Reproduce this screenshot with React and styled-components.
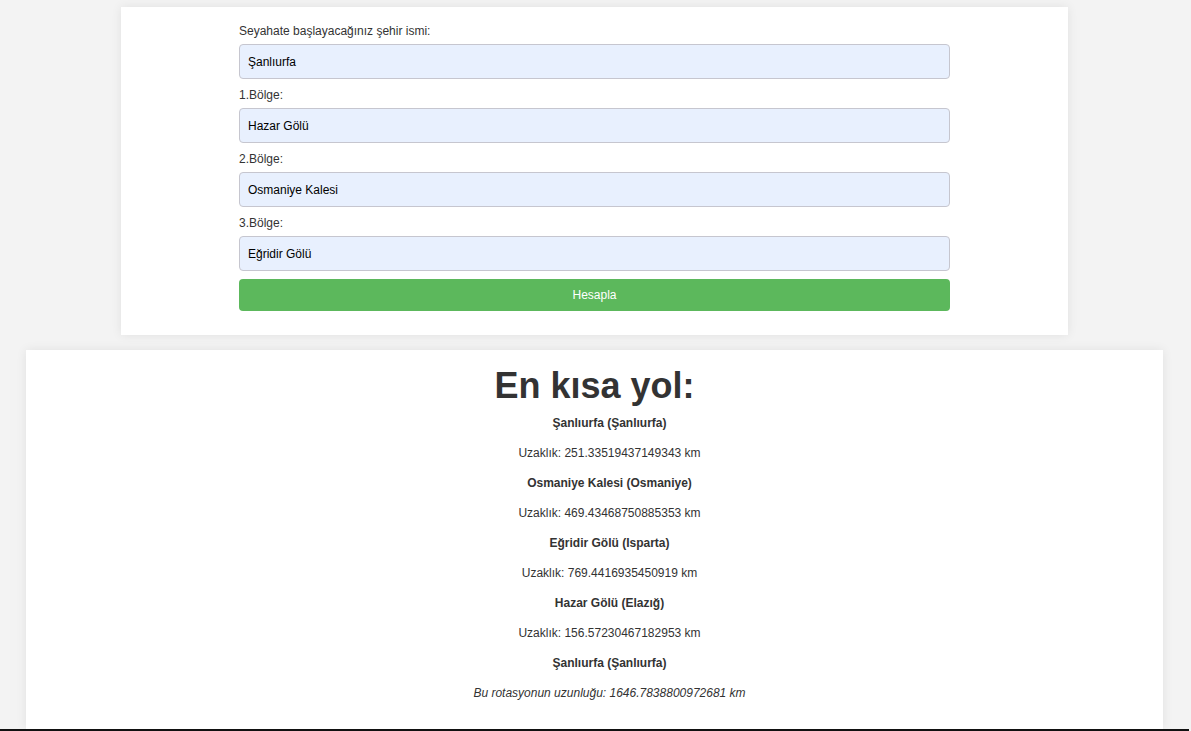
import React from 'react'
import styled, { createGlobalStyle } from 'styled-components'

const GlobalStyle = createGlobalStyle`
    html, body {
        margin: 0;
        padding: 0;
        background: #f3f3f3;
        font-family: "Liberation Sans", Arial, sans-serif;
        color: #333;
    }
`

const fields = [
    { label: 'Seyahate başlayacağınız şehir ismi:', value: 'Şanlıurfa' },
    { label: '1.Bölge:', value: 'Hazar Gölü' },
    { label: '2.Bölge:', value: 'Osmaniye Kalesi' },
    { label: '3.Bölge:', value: 'Eğridir Gölü' },
]

const route = [
    { place: 'Şanlıurfa (Şanlıurfa)', distance: '251.33519437149343' },
    { place: 'Osmaniye Kalesi (Osmaniye)', distance: '469.43468750885353' },
    { place: 'Eğridir Gölü (Isparta)', distance: '769.4416935450919' },
    { place: 'Hazar Gölü (Elazığ)', distance: '156.57230467182953' },
    { place: 'Şanlıurfa (Şanlıurfa)' },
]

const App = () => {
    return (
        <Page>
            <GlobalStyle />
            <FormCard>
                <Form onSubmit={e => e.preventDefault()}>
                    {fields.map(f => (
                        <Group key={f.label}>
                            <Label>{f.label}</Label>
                            <Input defaultValue={f.value} />
                        </Group>
                    ))}
                    <Button type="submit">Hesapla</Button>
                </Form>
            </FormCard>
            <ResultCard>
                <Title>En kısa yol:</Title>
                <Lines>
                    {route.map((r, i) => (
                        <React.Fragment key={i}>
                            <Line $bold>{r.place}</Line>
                            {r.distance && <Line>Uzaklık: {r.distance} km</Line>}
                        </React.Fragment>
                    ))}
                    <Line $italic>Bu rotasyonun uzunluğu: 1646.7838800972681 km</Line>
                </Lines>
            </ResultCard>
            <Footer />
        </Page>
    )
}

const Page = styled.div`
    padding: 7px 2px 0 0;
    display: flex;
    flex-direction: column;
    align-items: center;
`

const FormCard = styled.section`
    width: 947px;
    box-sizing: border-box;
    background: #fff;
    box-shadow: 0 0 10px rgba(0, 0, 0, 0.08);
    padding: 17px 0 24px;
    display: flex;
    justify-content: center;
`

const Form = styled.form`
    width: 711px;
    display: flex;
    flex-direction: column;
`

const Group = styled.div`
    display: flex;
    flex-direction: column;
    margin-bottom: 9px;
    &:nth-last-of-type(1) {
        margin-bottom: 8px;
    }
`

const Label = styled.label`
    font-size: 12px;
    line-height: 15px;
    color: #333;
    margin-bottom: 5px;
`

const Input = styled.input`
    height: 35px;
    box-sizing: border-box;
    border: 1px solid #c6c6cf;
    border-radius: 4px;
    background: #e8f0fe;
    padding: 0 8px;
    font-family: "Liberation Sans", Arial, sans-serif;
    font-size: 12px;
    color: #000;
    outline: none;
`

const Button = styled.button`
    height: 32px;
    border: none;
    border-radius: 4px;
    background: #5cb85c;
    color: #fff;
    font-family: "Liberation Sans", Arial, sans-serif;
    font-size: 12px;
    cursor: pointer;
`

const ResultCard = styled.section`
    width: 1137px;
    box-sizing: border-box;
    margin-top: 15px;
    height: 379px;
    background: #fff;
    box-shadow: 0 0 10px rgba(0, 0, 0, 0.08);
    padding-top: 15px;
    text-align: center;
`

const Title = styled.h1`
    margin: 0;
    font-size: 36px;
    line-height: 41px;
    font-weight: bold;
    color: #333;
`

const Lines = styled.div`
    margin-top: 9px;
    padding-left: 30px;
    display: flex;
    flex-direction: column;
    gap: 14px;
`

const Line = styled.p`
    margin: 0;
    font-size: 12px;
    line-height: 16px;
    color: #333;
    font-weight: ${p => (p.$bold ? 'bold' : 'normal')};
    font-style: ${p => (p.$italic ? 'italic' : 'normal')};
`

const Footer = styled.footer`
    align-self: stretch;
    height: 2px;
    background: #111;
`

export default App
